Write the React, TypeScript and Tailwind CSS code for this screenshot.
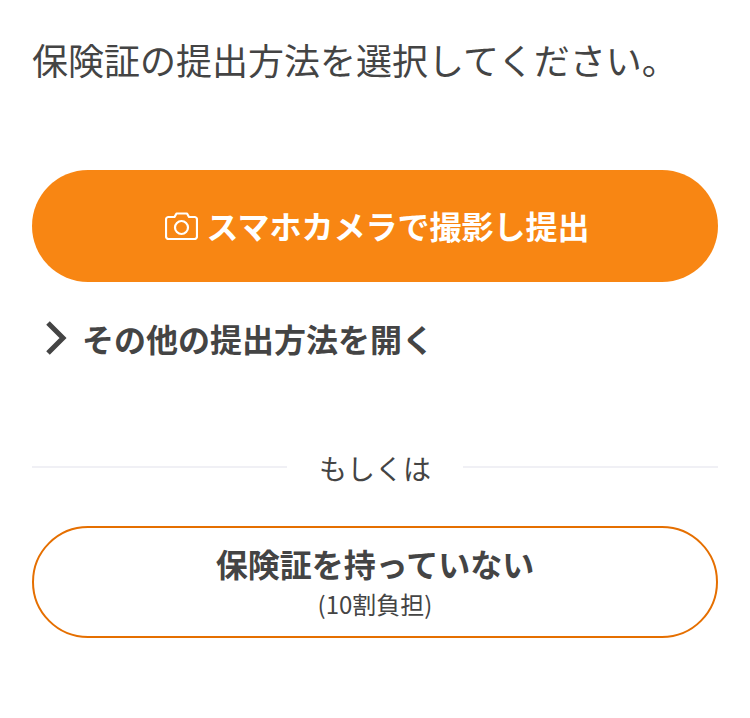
const font = "font-['Noto_Sans_CJK_JP','Noto_Sans',sans-serif]"

export default function App() {
  return (
    <div className={`min-h-[718px] bg-white px-8 pt-[34px] text-[#444444] ${font}`}>
      <p className="text-[36px] leading-[50px]">保険証の提出方法を選択してください。</p>

      <button className="mt-[86px] flex h-[112px] w-full items-center justify-center gap-2 rounded-full bg-[#f88613] pb-0.5 pl-[5px] text-[32px] font-bold text-white">
        <svg className="mt-0.5" width="33" height="28" viewBox="0 0 33 28" fill="none" stroke="currentColor" strokeWidth="2.2" strokeLinejoin="round">
          <path d="M3.5 5H9.5L11.5 1.5H22L24 5H29.5C30.8 5 32 6.2 32 7.5V24.5C32 25.8 30.8 27 29.5 27H3.5C2.2 27 1 25.8 1 24.5V7.5C1 6.2 2.2 5 3.5 5Z" />
          <circle cx="16.5" cy="15.5" r="6.5" />
        </svg>
        スマホカメラで撮影し提出
      </button>

      <div className="mt-8 flex items-center gap-[14px] pl-3 text-[32px] font-bold leading-[48px]">
        <svg width="24" height="36" viewBox="0 0 24 36" fill="none" stroke="currentColor" strokeWidth="5">
          <path d="M4 3l15 15L4 33" />
        </svg>
        その他の提出方法を開く
      </div>

      <div className="mt-[84px] flex items-center">
        <div className="h-0.5 flex-1 bg-[#f0f0f5]" />
        <span className="w-[176px] pt-0.5 text-center text-[28px] leading-10">もしくは</span>
        <div className="h-0.5 flex-1 bg-[#f0f0f5]" />
      </div>

      <button className="mt-[38px] flex h-[112px] w-full flex-col items-center justify-center rounded-full border-2 border-[#e56f00] bg-white pb-1">
        <span className="mb-0.5 text-[32px] font-bold leading-[45px]">保険証を持っていない</span>
        <span className="text-2xl leading-[32px]">(10割負担)</span>
      </button>
    </div>
  )
}
